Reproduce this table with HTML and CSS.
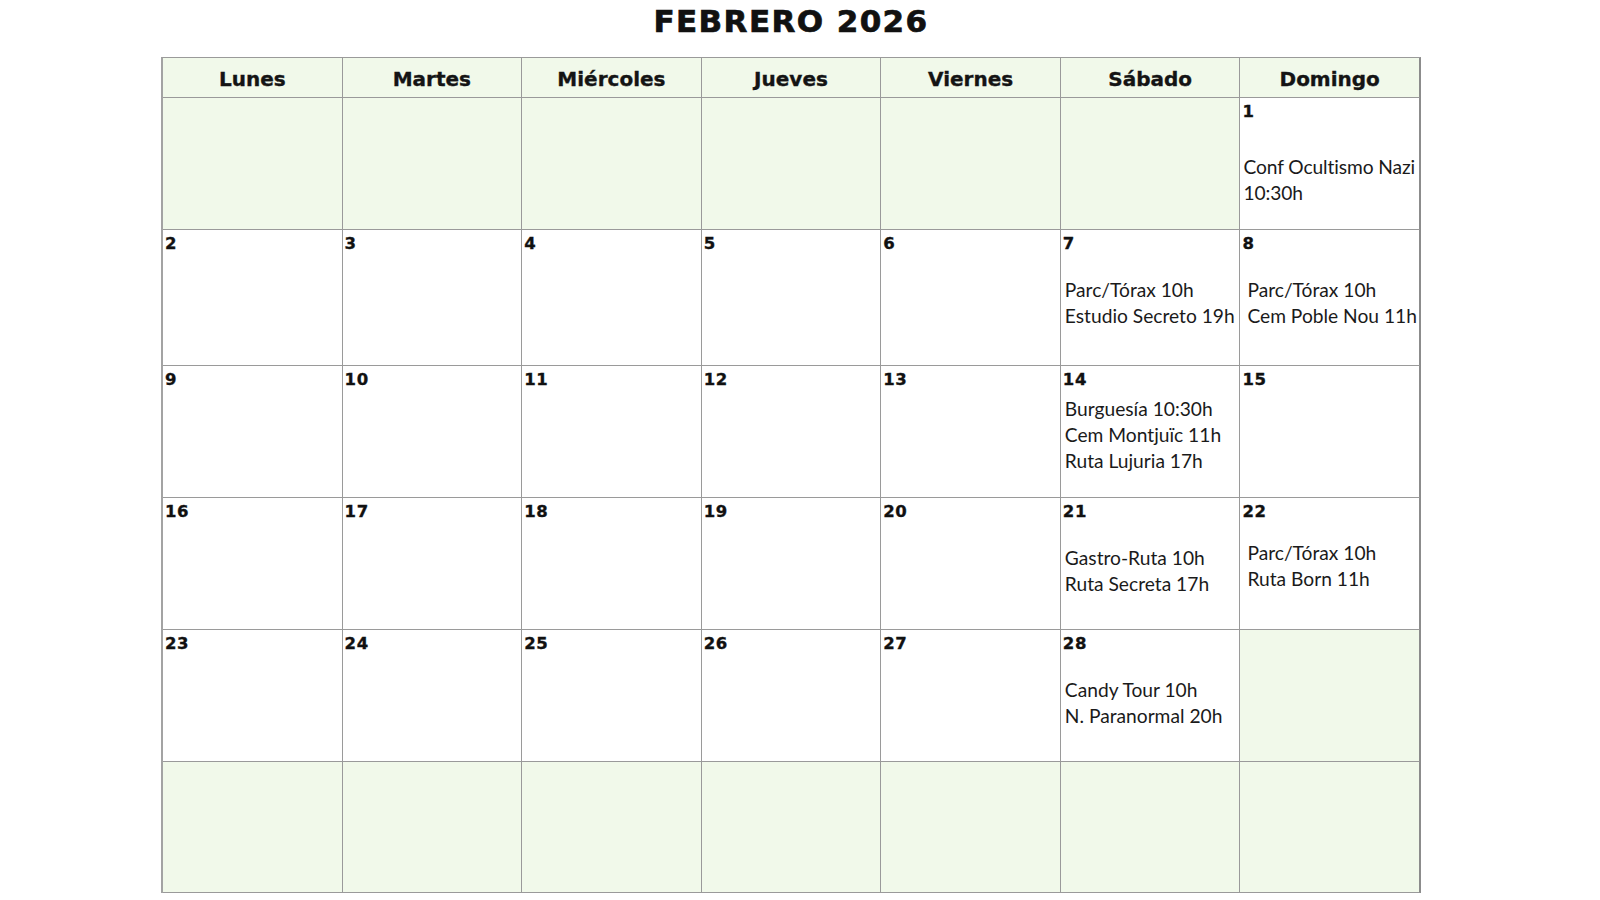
FILE: index.html
```html
<!DOCTYPE html>
<html lang="es">
<head>
<meta charset="utf-8">
<title>Febrero 2026</title>
<link rel="stylesheet" href="styles.css">
</head>
<body>
<main class="page">
  <h1 class="title">FEBRERO 2026</h1>
  <div class="cal">
    <div class="hd">Lunes</div>
    <div class="hd">Martes</div>
    <div class="hd">Miércoles</div>
    <div class="hd">Jueves</div>
    <div class="hd">Viernes</div>
    <div class="hd">Sábado</div>
    <div class="hd">Domingo</div>

    <div class="cell off"></div>
    <div class="cell off"></div>
    <div class="cell off"></div>
    <div class="cell off"></div>
    <div class="cell off"></div>
    <div class="cell off"></div>
    <div class="cell"><div class="num">1</div><div class="ev gap-l tight"><div>Conf Ocultismo Nazi</div><div>10:30h</div></div></div>

    <div class="cell"><div class="num">2</div></div>
    <div class="cell"><div class="num">3</div></div>
    <div class="cell"><div class="num">4</div></div>
    <div class="cell"><div class="num">5</div></div>
    <div class="cell"><div class="num">6</div></div>
    <div class="cell"><div class="num">7</div><div class="ev gap-m"><div>Parc/Tórax 10h</div><div>Estudio Secreto 19h</div></div></div>
    <div class="cell"><div class="num">8</div><div class="ev gap-m indent"><div>Parc/Tórax 10h</div><div>Cem Poble Nou 11h</div></div></div>

    <div class="cell"><div class="num">9</div></div>
    <div class="cell"><div class="num">10</div></div>
    <div class="cell"><div class="num">11</div></div>
    <div class="cell"><div class="num">12</div></div>
    <div class="cell"><div class="num">13</div></div>
    <div class="cell"><div class="num">14</div><div class="ev"><div>Burguesía 10:30h</div><div>Cem Montjuïc 11h</div><div>Ruta Lujuria 17h</div></div></div>
    <div class="cell"><div class="num">15</div></div>

    <div class="cell"><div class="num">16</div></div>
    <div class="cell"><div class="num">17</div></div>
    <div class="cell"><div class="num">18</div></div>
    <div class="cell"><div class="num">19</div></div>
    <div class="cell"><div class="num">20</div></div>
    <div class="cell"><div class="num">21</div><div class="ev gap-m"><div>Gastro-Ruta 10h</div><div>Ruta Secreta 17h</div></div></div>
    <div class="cell"><div class="num">22</div><div class="ev gap-s indent"><div>Parc/Tórax 10h</div><div>Ruta Born 11h</div></div></div>

    <div class="cell"><div class="num">23</div></div>
    <div class="cell"><div class="num">24</div></div>
    <div class="cell"><div class="num">25</div></div>
    <div class="cell"><div class="num">26</div></div>
    <div class="cell"><div class="num">27</div></div>
    <div class="cell"><div class="num">28</div><div class="ev gap-m"><div>Candy Tour 10h</div><div>N. Paranormal 20h</div></div></div>
    <div class="cell off"></div>

    <div class="cell off"></div>
    <div class="cell off"></div>
    <div class="cell off"></div>
    <div class="cell off"></div>
    <div class="cell off"></div>
    <div class="cell off"></div>
    <div class="cell off"></div>
  </div>
</main>
</body>
</html>
```

FILE: styles.css
```css
html, body {
  margin: 0;
  padding: 0;
  background: #ffffff;
}

.page {
  width: 1260px;
  margin-left: 161px;
  padding-top: 3px;
}

.title {
  margin: 0 0 18px 0;
  text-align: center;
  font-family: "DejaVu Sans", Verdana, sans-serif;
  font-weight: bold;
  font-size: 31px;
  line-height: 36px;
  letter-spacing: 1.4px;
  color: #111111;
  -webkit-text-stroke: 0.7px #111111;
}

.cal {
  display: grid;
  grid-template-columns: repeat(7, 1fr);
  grid-template-rows: 40px 132px 136px 132px 132px 132px 131px;
  border-top: 1px solid #9a9a9a;
  border-left: 2px solid #a3a3a3;
  border-right: 1px solid #8c8c8c;
  width: 1260px;
  box-sizing: border-box;
}

.hd,
.cell {
  border-right: 1px solid #9a9a9a;
  border-bottom: 1px solid #9a9a9a;
  box-sizing: border-box;
  overflow: hidden;
  min-width: 0;
}

.hd:nth-child(7n),
.cell:nth-child(7n) {
  border-right: 1px solid #8c8c8c;
}

.hd {
  background: #f1f9ea;
  text-align: center;
  font-family: "DejaVu Sans", Verdana, sans-serif;
  font-weight: bold;
  font-size: 20px;
  line-height: 35px;
  padding-top: 4px;
  color: #141414;
  -webkit-text-stroke: 0.35px #141414;
}

.cell {
  background: #ffffff;
  padding: 4px 0 0 2px;
}

.cell.off {
  background: #f1f9ea;
}

.num {
  font-family: "DejaVu Sans", Verdana, sans-serif;
  font-weight: bold;
  font-size: 16.5px;
  line-height: 20px;
  letter-spacing: 0.6px;
  color: #111111;
  -webkit-text-stroke: 0.35px #111111;
}

.ev {
  margin-top: 6px;
  padding-left: 2px;
  font-family: Lato, "Open Sans", sans-serif;
  font-size: 19.2px;
  line-height: 26px;
  color: #1a1a1a;
  white-space: nowrap;
}

.ev.gap-s { margin-top: 18px; }
.ev.gap-m { margin-top: 23px; }
.ev.gap-l { margin-top: 32px; }
.ev.indent { padding-left: 5px; }
.ev.tight { padding-left: 1px; letter-spacing: -0.1px; }
```
